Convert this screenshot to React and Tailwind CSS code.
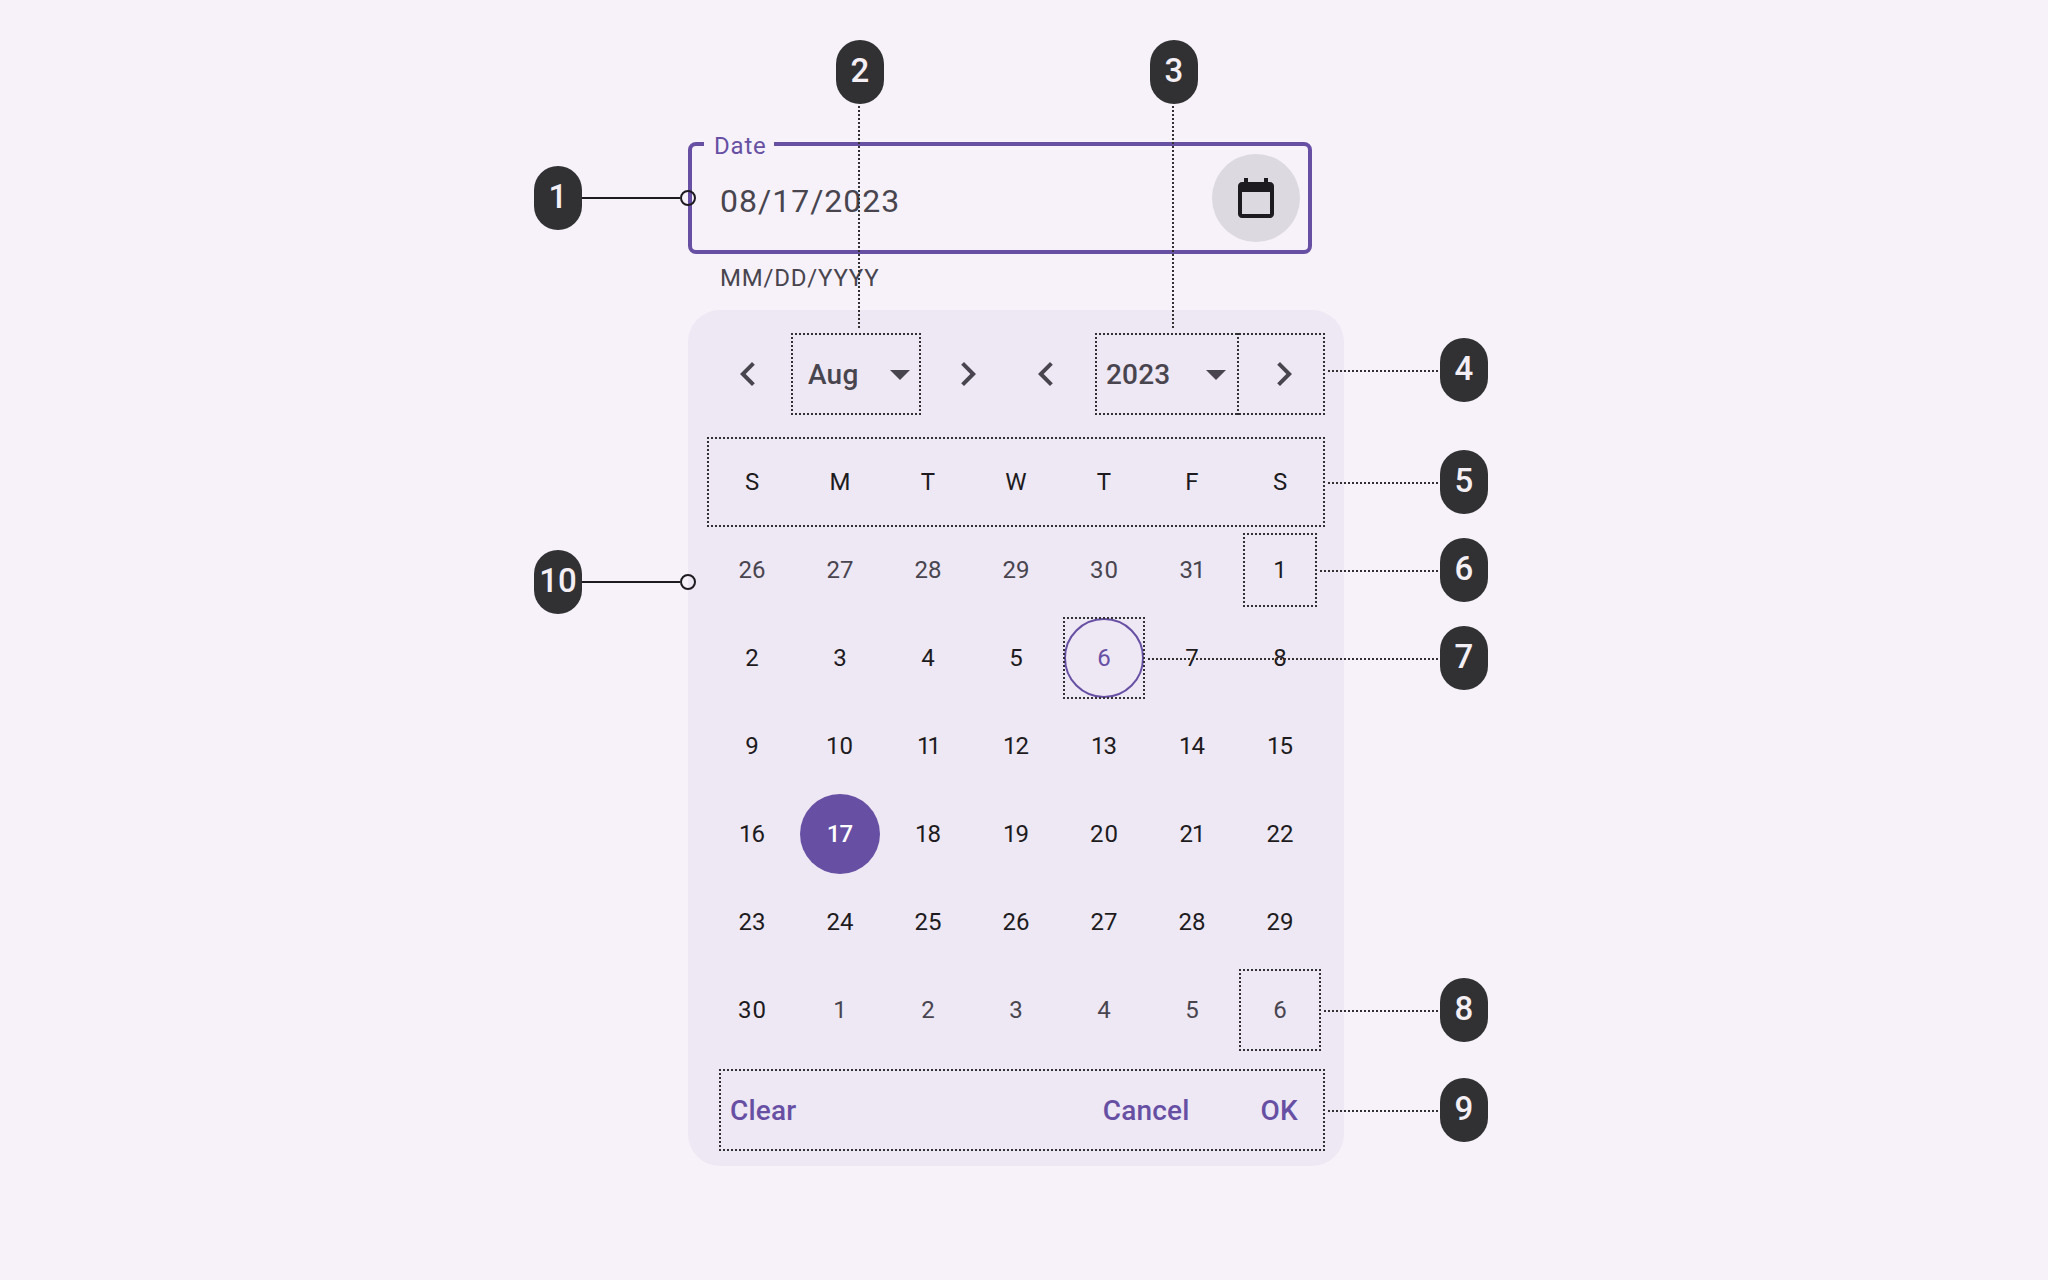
const WEEKDAYS = ["S", "M", "T", "W", "T", "F", "S"];

const DAYS = [
  ...[26, 27, 28, 29, 30, 31].map((n) => ({ n, kind: "outside" })),
  ...Array.from({ length: 30 }, (_, i) => ({
    n: i + 1,
    kind: i + 1 === 6 ? "today" : i + 1 === 17 ? "selected" : "day",
  })),
  ...[1, 2, 3, 4, 5, 6].map((n) => ({ n, kind: "outside" })),
];

const KIND_CLASS = {
  outside: "text-[#49454f]",
  day: "text-[#1d1b20]",
  today: "border-2 border-[#6750a4] text-[#6750a4]",
  selected: "bg-[#6750a4] font-medium text-white",
};

/* The figure one is narrow and zero is wide, so pairs that hold them are spaced to suit. */
function tracking(n) {
  if (n === 11) return "tracking-[-3px] pr-px";
  if (n === 10) return "pr-px";
  if (n > 9 && n < 20) return "tracking-[-1px] pr-px";
  if (n === 21 || n === 31) return "tracking-[-1px]";
  if (n === 20 || n === 30) return "tracking-[1px] -mr-px";
  return "";
}

const BOXES = [
  { w: 130, h: 82, cls: "left-[791px] top-[333px]" },
  { w: 230, h: 82, cls: "left-[1095px] top-[333px]" },
  { w: 618, h: 90, cls: "left-[707px] top-[437px]" },
  { w: 74, h: 74, cls: "left-[1243px] top-[533px]" },
  { w: 82, h: 82, cls: "left-[1063px] top-[617px]" },
  { w: 82, h: 82, cls: "left-[1239px] top-[969px]" },
  { w: 606, h: 82, cls: "left-[719px] top-[1069px]" },
];

const DOTTED_X =
  "h-0.5 bg-[repeating-linear-gradient(90deg,#313033_0_2px,transparent_2px_4px)]";
const DOTTED_Y =
  "w-0.5 bg-[repeating-linear-gradient(180deg,#313033_0_2px,transparent_2px_4px)]";

const LINES = [
  `${DOTTED_Y} left-[858px] top-[106px] h-[224px]`,
  `${DOTTED_Y} left-[1172px] top-[106px] h-[224px]`,
  `${DOTTED_Y} left-[1237px] top-[333px] h-[82px]`,
  `${DOTTED_X} left-[1328px] top-[370px] w-[110px]`,
  `${DOTTED_X} left-[1328px] top-[482px] w-[110px]`,
  `${DOTTED_X} left-[1320px] top-[570px] w-[118px]`,
  `${DOTTED_X} left-[1148px] top-[658px] w-[290px]`,
  `${DOTTED_X} left-[1324px] top-[1010px] w-[114px]`,
  `${DOTTED_X} left-[1328px] top-[1110px] w-[110px]`,
];

const PINS = [
  { n: 1, cls: "left-[534px] top-[166px]" },
  { n: 2, cls: "left-[836px] top-[40px]" },
  { n: 3, cls: "left-[1150px] top-[40px]" },
  { n: 4, cls: "left-[1440px] top-[338px]" },
  { n: 5, cls: "left-[1440px] top-[450px]" },
  { n: 6, cls: "left-[1440px] top-[538px]" },
  { n: 7, cls: "left-[1440px] top-[626px]" },
  { n: 8, cls: "left-[1440px] top-[978px]" },
  { n: 9, cls: "left-[1440px] top-[1078px]" },
  { n: 10, cls: "left-[534px] top-[550px]" },
];

function Icon({ d, className = "" }) {
  return (
    <svg viewBox="0 0 24 24" className={`size-12 shrink-0 ${className}`} fill="currentColor">
      <path d={d} />
    </svg>
  );
}

const LEFT = "M15.41 7.41 14 6l-6 6 6 6 1.41-1.41L10.83 12z";
const RIGHT = "M10 6 8.59 7.41 13.17 12l-4.58 4.59L10 18l6-6z";
const DOWN = "M7 10l5 5 5-5z";
const CALENDAR =
  "M5 22q-.825 0-1.412-.587T3 20V6q0-.825.588-1.412T5 4h1V2h2v2h8V2h2v2h1q.825 0 1.413.588T21 6v14q0 .825-.587 1.413T19 22zm0-2h14V9H5z";

function DateField() {
  return (
    <div className="w-[624px]">
      <div className="relative flex h-28 items-center justify-between rounded-lg border-4 border-[#6750a4] pr-2 pl-7">
        <span className="absolute -top-4 left-3 flex h-8 w-[70px] items-center bg-[#f7f2fa] pl-2.5 text-2xl leading-8 tracking-[0.8px] text-[#6750a4]">
          Date
        </span>
        <span className="pt-1.5 text-[32px] leading-12 tracking-[1px] text-[#49454f]">08/17/2023</span>
        <button className="flex size-22 items-center justify-center rounded-full bg-[#dcd9e0] text-[#1d1b20]">
          <Icon d={CALENDAR} />
        </button>
      </div>
      <p className="mt-2 pl-8 text-2xl leading-8 tracking-[0.8px] text-[#49454f]">MM/DD/YYYY</p>
    </div>
  );
}

function Calendar() {
  return (
    <div className="mt-4 flex h-[856px] w-[656px] flex-col rounded-[32px] bg-[#eee8f4]">
      <div className="flex h-32 items-center pl-9 text-[28px] font-medium tracking-[0.2px] text-[#49454f]">
        <Icon d={LEFT} />
        <span className="ml-9 w-17 pt-0.5">Aug</span>
        <Icon d={DOWN} />
        <Icon d={RIGHT} className="ml-5" />
        <Icon d={LEFT} className="ml-[30px]" />
        <span className="ml-9 w-[86px] pt-0.5">2023</span>
        <Icon d={DOWN} />
        <Icon d={RIGHT} className="ml-5" />
      </div>
      <div className="grid grid-cols-7 px-5 text-2xl text-[#1d1b20]">
        {WEEKDAYS.map((d, i) => (
          <div key={i} className="flex h-22 items-center justify-center">
            {d}
          </div>
        ))}
        {DAYS.map(({ n, kind }, i) => (
          <div key={i} className="flex h-22 items-center justify-center">
            <div
              className={`flex size-20 items-center justify-center rounded-full ${KIND_CLASS[kind]}`}
            >
              <span className={tracking(n)}>{n}</span>
            </div>
          </div>
        ))}
      </div>
      <div className="flex h-28 items-center pt-0.5 pr-[46px] pl-[42px] text-[28px] font-medium tracking-[0.2px] text-[#6750a4]">
        <button>Clear</button>
        <button className="ml-auto">Cancel</button>
        <button className="ml-[71px]">OK</button>
      </div>
    </div>
  );
}

function Annotations() {
  return (
    <div className="pointer-events-none absolute inset-0">
      {BOXES.map(({ w, h, cls }) => (
        <svg key={cls} width={w} height={h} className={`absolute ${cls}`}>
          <rect
            x="1"
            y="1"
            width={w - 2}
            height={h - 2}
            fill="none"
            stroke="#313033"
            strokeWidth="2"
            strokeDasharray="2 2"
            strokeDashoffset="1"
          />
        </svg>
      ))}
      {LINES.map((cls) => (
        <div key={cls} className={`absolute ${cls}`} />
      ))}
      <div className="absolute top-[197px] left-[582px] h-0.5 w-[98px] bg-[#1d1b20]" />
      <div className="absolute top-[190px] left-[680px] size-4 rounded-full border-2 border-[#1d1b20]" />
      <div className="absolute top-[581px] left-[582px] h-0.5 w-[98px] bg-[#1d1b20]" />
      <div className="absolute top-[574px] left-[680px] size-4 rounded-full border-2 border-[#1d1b20]" />
      {PINS.map(({ n, cls }) => (
        <div
          key={n}
          className={`absolute flex h-16 w-12 items-center justify-center rounded-full bg-[#313033] pb-0.5 text-[33px] font-medium text-[#f4eff4] ${cls}`}
        >
          {n}
        </div>
      ))}
    </div>
  );
}

export default function App() {
  return (
    <div className="relative h-[1280px] w-[2048px] overflow-hidden bg-[#f7f2fa] pt-[142px] pl-[688px] font-['Roboto',sans-serif]">
      <DateField />
      <Calendar />
      <Annotations />
    </div>
  );
}
